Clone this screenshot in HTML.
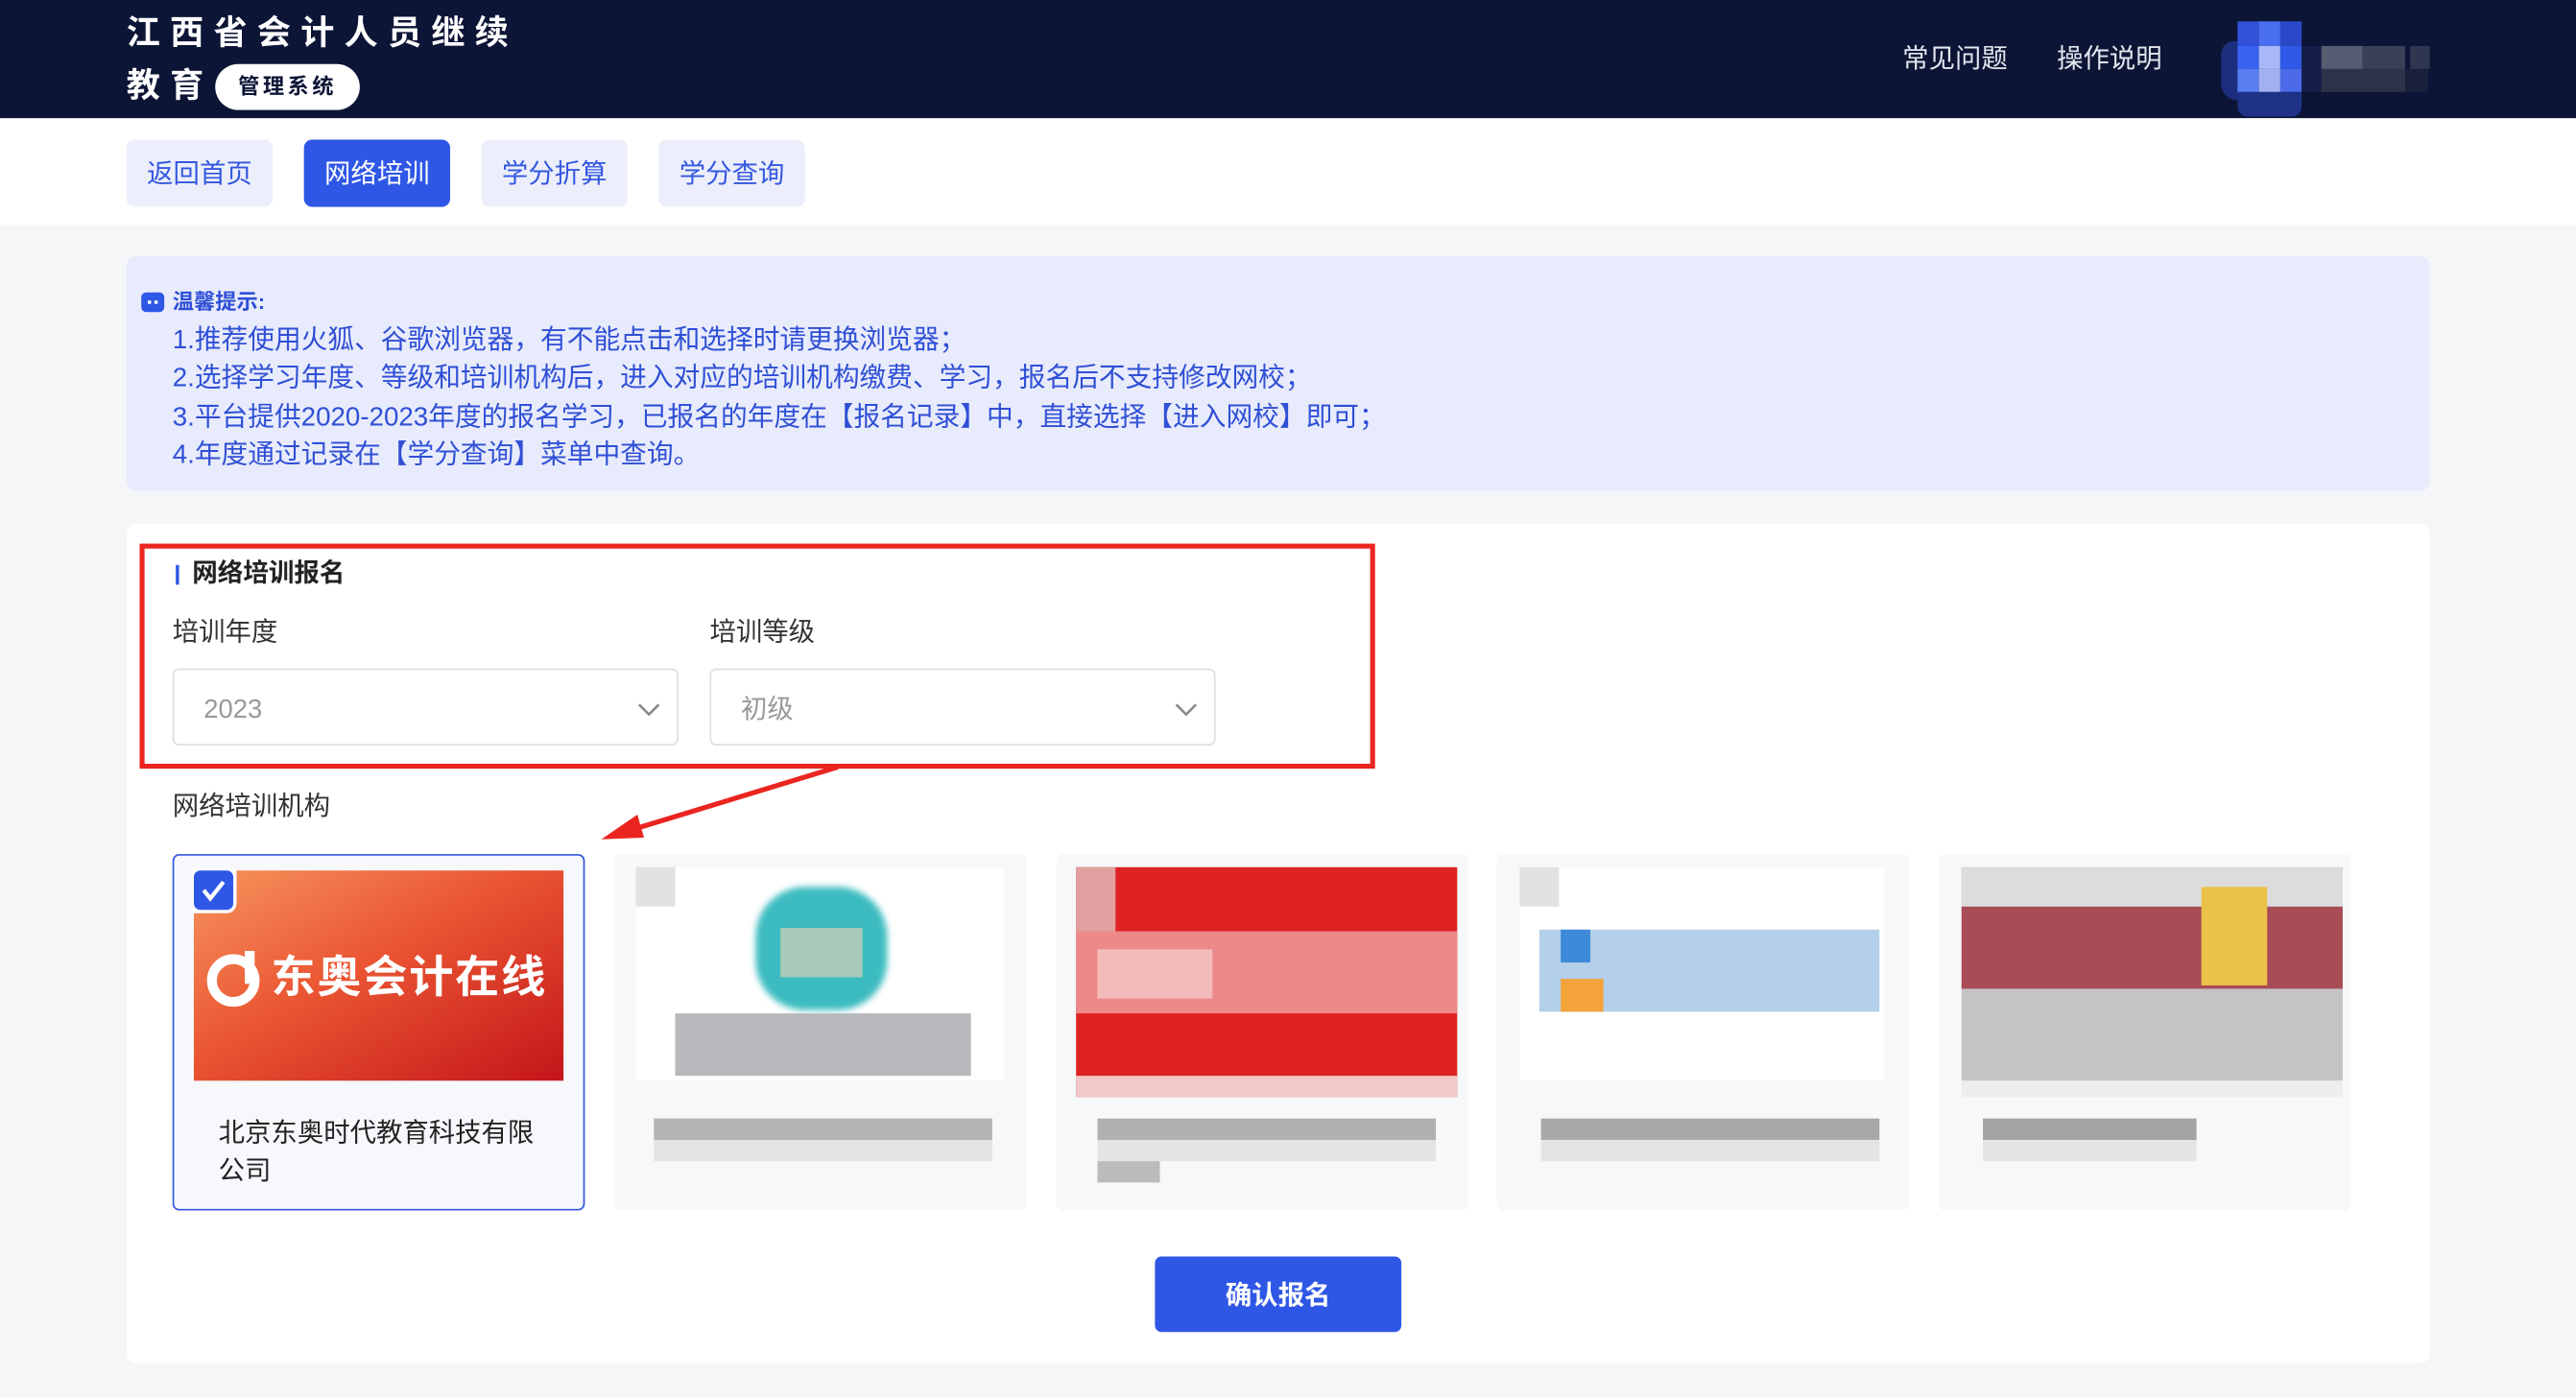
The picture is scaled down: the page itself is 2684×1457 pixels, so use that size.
<!DOCTYPE html>
<html><head><meta charset="utf-8">
<style>
*{margin:0;padding:0;box-sizing:border-box}
html,body{width:2684px;height:1456px;overflow:hidden;background:#f5f6f8}
#s{position:absolute;left:0;top:0;width:1568px;height:851px;transform:scale(1.71173);transform-origin:0 0;font-family:"Liberation Sans","Noto Sans CJK SC",sans-serif;background:#f5f6f8}
.a{position:absolute}
.hdr{left:0;top:0;width:1568px;height:72px;background:#0c1535}
.t1{left:77px;top:7px;color:#fff;font-size:20.5px;font-weight:bold;letter-spacing:6px;line-height:28px}
.t2{left:77px;top:39px;color:#fff;font-size:20.5px;font-weight:bold;letter-spacing:6px;line-height:28px}
.pill{left:131px;top:39px;width:88px;height:28px;background:#fff;border-radius:14px;color:#0c1535;font-size:13px;font-weight:bold;text-align:center;line-height:28px;letter-spacing:2px}
.hl{color:#e3e6ee;font-size:16px;top:26px;line-height:22px}
.nav{left:0;top:72px;width:1568px;height:65px;background:#fff}
.btn{top:85px;width:89px;height:41px;border-radius:5px;background:#eceffb;color:#3457e0;font-size:16px;text-align:center;line-height:43px}
.btn.on{background:#2f57e6;color:#fff}
.notice{left:77px;top:156px;width:1402px;height:143px;background:#e8ebfb;border-radius:6px}
.nl{left:105px;color:#2f4fd6;font-size:16.2px;line-height:22px;white-space:nowrap}
.panel{left:77px;top:319px;width:1402px;height:511px;background:#fff;border-radius:6px}
.red{left:85px;top:331px;width:752px;height:137px;border:3px solid #ea2520}
.lbl{color:#333;font-size:16px;line-height:22px}
.sel{top:407px;width:308px;height:47px;border:1px solid #dcdfe6;border-radius:4px;background:#fff;color:#999;font-size:16px;line-height:50px;padding-left:18px}
.sel svg{position:absolute;right:10px;top:19px}
.card{top:520px;width:251px;height:217px;background:#f7f8fa;border-radius:4px}
.blk{position:absolute}
.ok{left:703px;top:765px;width:150px;height:46px;background:#2f57e6;border-radius:4px;color:#fff;font-size:16px;text-align:center;line-height:49px;font-weight:bold}
</style></head><body><div id="s">
<div class="a hdr"></div>
<div class="a t1">江西省会计人员继续</div>
<div class="a t2">教育</div>
<div class="a pill">管理系统</div>
<div class="a hl" style="left:1158px">常见问题</div>
<div class="a hl" style="left:1252px">操作说明</div>
<div class="a" style="left:1352px;top:25px;width:14px;height:36px;border-radius:8px 0 0 10px;background:#1c2f7e"></div>
<div class="a" style="left:1362px;top:13px;width:13px;height:15px;background:#3152d8"></div>
<div class="a" style="left:1375px;top:13px;width:13px;height:15px;background:#4a6ef0"></div>
<div class="a" style="left:1388px;top:13px;width:13px;height:15px;background:#2a48c8"></div>
<div class="a" style="left:1362px;top:28px;width:13px;height:14px;background:#3a62f0"></div>
<div class="a" style="left:1375px;top:28px;width:13px;height:14px;background:#a8b8f8"></div>
<div class="a" style="left:1388px;top:28px;width:13px;height:14px;background:#2f5ae8"></div>
<div class="a" style="left:1362px;top:42px;width:13px;height:14px;background:#5a7ef0"></div>
<div class="a" style="left:1375px;top:42px;width:13px;height:14px;background:#a0b0f0"></div>
<div class="a" style="left:1388px;top:42px;width:13px;height:14px;background:#4a6ae8"></div>
<div class="a" style="left:1362px;top:56px;width:39px;height:15px;border-radius:0 0 6px 6px;background:#1e3288"></div>
<div class="a" style="left:1401px;top:28px;width:12px;height:28px;background:#141e48"></div>
<div class="a" style="left:1413px;top:28px;width:25px;height:14px;background:#585c72"></div>
<div class="a" style="left:1438px;top:28px;width:26px;height:14px;background:#3a4058"></div>
<div class="a" style="left:1413px;top:42px;width:51px;height:14px;background:#2c3248"></div>
<div class="a" style="left:1464px;top:42px;width:14px;height:14px;background:#18203c"></div>
<div class="a" style="left:1467px;top:28px;width:12px;height:14px;background:#2f3650"></div>

<div class="a nav"></div>
<div class="a btn" style="left:77px">返回首页</div>
<div class="a btn on" style="left:185px">网络培训</div>
<div class="a btn" style="left:293px">学分折算</div>
<div class="a btn" style="left:401px">学分查询</div>

<div class="a notice"></div>
<div class="a" style="left:86px;top:178px;width:14px;height:12px;background:#2f57e6;border-radius:3px"></div>
<div class="a" style="left:90px;top:183px;width:2px;height:2px;background:#fff"></div>
<div class="a" style="left:94px;top:183px;width:2px;height:2px;background:#fff"></div>
<div class="a nl" style="top:173px;font-size:13px;font-weight:bold">温馨提示:</div>
<div class="a nl" style="top:196px">1.推荐使用火狐、谷歌浏览器，有不能点击和选择时请更换浏览器；</div>
<div class="a nl" style="top:219px">2.选择学习年度、等级和培训机构后，进入对应的培训机构缴费、学习，报名后不支持修改网校；</div>
<div class="a nl" style="top:243px">3.平台提供2020-2023年度的报名学习，已报名的年度在【报名记录】中，直接选择【进入网校】即可；</div>
<div class="a nl" style="top:266px">4.年度通过记录在【学分查询】菜单中查询。</div>

<div class="a panel"></div>
<div class="a" style="left:107px;top:344px;width:2px;height:12px;background:#2f57e6"></div>
<div class="a" style="left:117px;top:339px;color:#222;font-size:15.5px;font-weight:bold;line-height:22px">网络培训报名</div>
<div class="a lbl" style="left:105px;top:375px">培训年度</div>
<div class="a lbl" style="left:432px;top:375px">培训等级</div>
<div class="a sel" style="left:105px">2023<svg width="14" height="10" viewBox="0 0 14 10"><path d="M1 2l6 6 6-6" fill="none" stroke="#888" stroke-width="1.5"/></svg></div>
<div class="a sel" style="left:432px">初级<svg width="14" height="10" viewBox="0 0 14 10"><path d="M1 2l6 6 6-6" fill="none" stroke="#888" stroke-width="1.5"/></svg></div>
<div class="a red"></div>
<svg class="a" style="left:360px;top:462px" width="160" height="55" viewBox="0 0 160 55"><path d="M150 5 L22 44" stroke="#ea2520" stroke-width="3"/><path d="M6 49 L28 34 L32 48 Z" fill="#ea2520"/></svg>
<div class="a lbl" style="left:105px;top:481px">网络培训机构</div>

<div class="a card" style="left:105px;border:1px solid #3457e0;background:#f6f8fc"></div>
<div class="a" style="left:118px;top:530px;width:225px;height:128px;background:linear-gradient(150deg,#f7955e 0%,#ea5532 45%,#c4151a 100%)"></div>
<svg class="a" style="left:123px;top:577px" width="38" height="36" viewBox="0 0 38 36"><circle cx="19" cy="20" r="13" fill="none" stroke="#fff" stroke-width="6"/><rect x="26" y="2" width="6" height="20" fill="#fff"/></svg>
<div class="a" style="left:165px;top:578px;color:#fff;font-size:27px;font-weight:bold;line-height:34px;letter-spacing:1px">东奥会计在线</div>
<div class="a" style="left:117px;top:529px;width:27px;height:27px;background:#fff;border-radius:0 0 6px 0"></div>
<div class="a" style="left:118px;top:530px;width:24px;height:24px;background:#2f57e6;border-radius:4px"></div>
<svg class="a" style="left:118px;top:530px" width="24" height="24" viewBox="0 0 24 24"><path d="M6 12l4 5 8-10" fill="none" stroke="#fff" stroke-width="2.5"/></svg>
<div class="a" style="left:133px;top:679px;color:#222;font-size:16px;line-height:23px;width:200px">北京东奥时代教育科技有限公司</div>

<div class="a card" style="left:374px"></div>
<div class="blk" style="left:387px;top:528px;width:224px;height:130px;background:#fff"></div>
<div class="blk" style="left:387px;top:528px;width:24px;height:24px;background:#e2e2e2"></div>
<div class="blk" style="left:460px;top:540px;width:80px;height:75px;border-radius:30px;background:#3cbcc0;filter:blur(2px)"></div>
<div class="blk" style="left:475px;top:565px;width:50px;height:30px;background:#a8c9b8"></div>
<div class="blk" style="left:411px;top:617px;width:180px;height:38px;background:#b8b8bc"></div>
<div class="blk" style="left:398px;top:681px;width:206px;height:26px;background:linear-gradient(#b4b4b6 50%,#e4e4e6 50%)"></div>

<div class="a card" style="left:643px"></div>
<div class="blk" style="left:655px;top:528px;width:232px;height:140px;background:#df2222"></div>
<div class="blk" style="left:655px;top:528px;width:24px;height:40px;background:#e0a0a0"></div>
<div class="blk" style="left:655px;top:567px;width:232px;height:50px;background:#ec8a8a"></div>
<div class="blk" style="left:668px;top:578px;width:70px;height:30px;background:#f3baba"></div>
<div class="blk" style="left:655px;top:655px;width:232px;height:13px;background:#f2c8c8"></div>
<div class="blk" style="left:668px;top:681px;width:206px;height:26px;background:linear-gradient(#b0b0b2 50%,#e4e4e6 50%)"></div>
<div class="blk" style="left:668px;top:707px;width:38px;height:13px;background:#bbb"></div>

<div class="a card" style="left:911px"></div>
<div class="blk" style="left:925px;top:528px;width:222px;height:130px;background:#fff"></div>
<div class="blk" style="left:925px;top:528px;width:24px;height:24px;background:#e2e2e2"></div>
<div class="blk" style="left:937px;top:566px;width:207px;height:50px;background:#b3cfea"></div>
<div class="blk" style="left:950px;top:566px;width:18px;height:20px;background:#3d8ad8"></div>
<div class="blk" style="left:950px;top:596px;width:26px;height:20px;background:#f4a23a"></div>
<div class="blk" style="left:938px;top:681px;width:206px;height:26px;background:linear-gradient(#a8a8aa 50%,#e4e4e6 50%)"></div>

<div class="a card" style="left:1180px"></div>
<div class="blk" style="left:1194px;top:528px;width:232px;height:130px;background:#c4c4c6"></div>
<div class="blk" style="left:1194px;top:528px;width:232px;height:24px;background:#dcdcdc"></div>
<div class="blk" style="left:1194px;top:552px;width:232px;height:50px;background:#a84c55"></div>
<div class="blk" style="left:1340px;top:540px;width:40px;height:60px;background:#ecc14a"></div>
<div class="blk" style="left:1194px;top:658px;width:232px;height:10px;background:#eee"></div>
<div class="blk" style="left:1207px;top:681px;width:130px;height:26px;background:linear-gradient(#a4a4a6 50%,#e4e4e6 50%)"></div>

<div class="a ok">确认报名</div>
</div></body></html>
